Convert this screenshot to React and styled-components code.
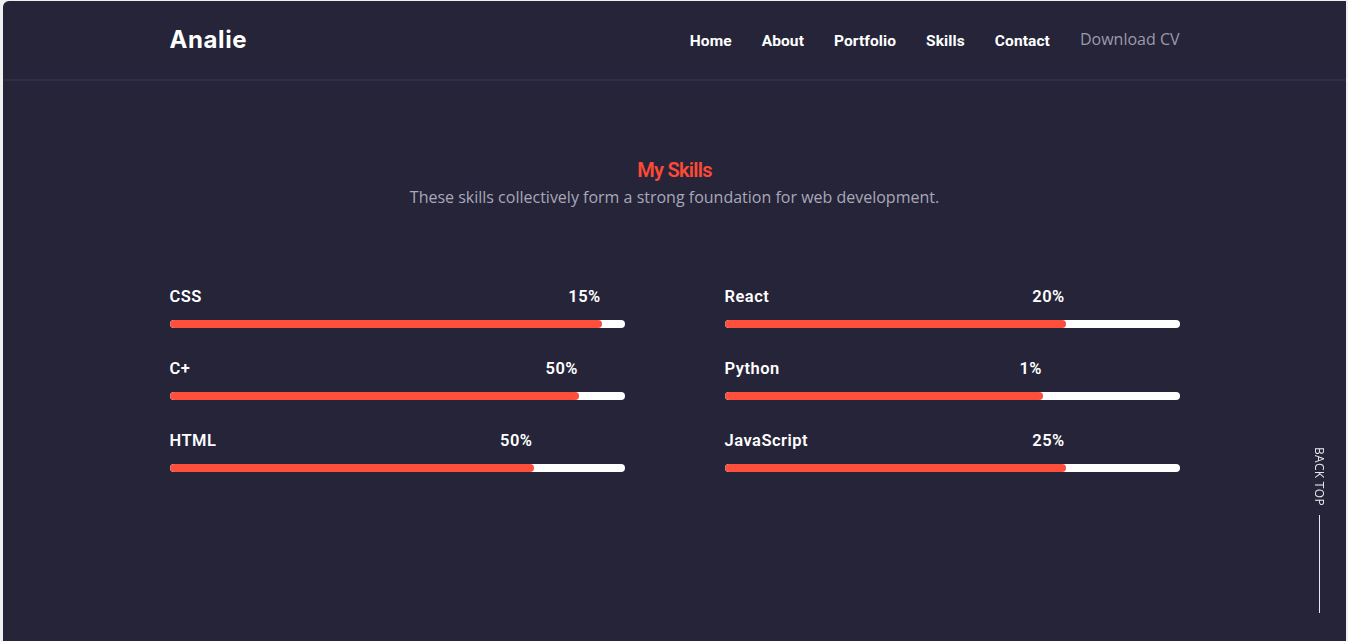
import React from 'react'
import styled, { createGlobalStyle } from 'styled-components'

const GlobalStyle = createGlobalStyle`
	* { box-sizing: border-box; }
	html, body {
		margin: 0;
		padding: 0;
		background: #f0f0f0;
		overflow: hidden;
	}
	#root {
		padding: 1px 2px 0 3px;
	}
`

const skills = [
	{ name: 'CSS', pct: '15%', fill: 95 },
	{ name: 'React', pct: '20%', fill: 75 },
	{ name: 'C+', pct: '50%', fill: 90 },
	{ name: 'Python', pct: '1%', fill: 70 },
	{ name: 'HTML', pct: '50%', fill: 80 },
	{ name: 'JavaScript', pct: '25%', fill: 75 },
]

const navLinks = ['Home', 'About', 'Portfolio', 'Skills', 'Contact']

const Page = styled.div`
	background: #252439;
	border-top-left-radius: 6px;
	min-height: 700px;
	color: #fff;
`

const Header = styled.header`
	height: 80px;
	border-bottom: 2px solid #2e2d43;
`

const Container = styled.div`
	width: 1010px;
	margin: 0 auto;
`

const HeaderInner = styled(Container)`
	height: 100%;
	display: flex;
	align-items: center;
	justify-content: space-between;
`

const Logo = styled.a`
	font-family: Inter, "Noto Sans", sans-serif;
	font-weight: 700;
	font-size: 24px;
	letter-spacing: 0.6px;
	color: #fff;
	margin-top: -2px;
`

const Nav = styled.nav`
	display: flex;
	align-items: center;
	gap: 30px;
`

const NavLink = styled.a`
	font-family: Roboto, "Liberation Sans", sans-serif;
	font-weight: 700;
	font-size: 15.5px;
	letter-spacing: 0.1px;
	color: #fff;
	margin-top: 1px;
`

const DownloadLink = styled.a`
	font-family: "Open Sans", sans-serif;
	font-size: 16px;
	color: #9c9baa;
	margin-top: -2px;
`

const Section = styled.section`
	padding-top: 77px;
`

const SectionHead = styled.div`
	text-align: center;
`

const Title = styled.h2`
	margin: 0;
	font-family: Roboto, "Liberation Sans", sans-serif;
	font-weight: 600;
	font-size: 20px;
	line-height: 24px;
	letter-spacing: -0.7px;
	color: #fd4a36;
`

const Subtitle = styled.p`
	margin: 3px 0 0;
	font-family: "Open Sans", sans-serif;
	font-size: 16px;
	line-height: 24px;
	color: #a9a8b7;
`

const Grid = styled(Container)`
	margin-top: 77px;
	display: grid;
	grid-template-columns: 455px 455px;
	column-gap: 100px;
	row-gap: 30px;
`

const Skill = styled.div`
	display: flex;
	flex-direction: column;
`

const LabelRow = styled.div`
	display: flex;
	justify-content: space-between;
	font-family: Roboto, "Liberation Sans", sans-serif;
	font-weight: 600;
	font-size: 16.5px;
	line-height: 20px;
	letter-spacing: 0.5px;
	color: #fff;
	margin-top: 1px;
	margin-bottom: 13px;
`

const Percent = styled.span`
	margin-right: 1px;
`

const Track = styled.div`
	height: 8px;
	border-radius: 4px;
	background: #fff;
	overflow: hidden;
`

const Fill = styled.div`
	height: 100%;
	border-radius: 4px;
	background: #fd4f3b;
`

const BackTop = styled.a`
	position: fixed;
	right: 20px;
	bottom: 28px;
	display: flex;
	flex-direction: column;
	align-items: center;
	gap: 9px;
	color: #e8e8ee;
`

const BackText = styled.span`
	writing-mode: vertical-rl;
	font-family: "Open Sans", sans-serif;
	font-size: 12px;
	letter-spacing: 0.3px;
`

const BackLine = styled.span`
	width: 1px;
	height: 98px;
	background: #e8e8ee;
`

export default function App() {
	return (
		<>
			<GlobalStyle />
			<Page>
				<Header>
					<HeaderInner>
						<Logo>Analie</Logo>
						<Nav>
							{navLinks.map(l => <NavLink key={l}>{l}</NavLink>)}
							<DownloadLink>Download CV</DownloadLink>
						</Nav>
					</HeaderInner>
				</Header>
				<Section>
					<SectionHead>
						<Title>My Skills</Title>
						<Subtitle>These skills collectively form a strong foundation for web development.</Subtitle>
					</SectionHead>
					<Grid>
						{skills.map(s => (
							<Skill key={s.name}>
								<LabelRow style={{ width: `${s.fill}%` }}>
									<span>{s.name}</span>
									<Percent>{s.pct}</Percent>
								</LabelRow>
								<Track>
									<Fill style={{ width: `${s.fill}%` }} />
								</Track>
							</Skill>
						))}
					</Grid>
				</Section>
				<BackTop>
					<BackText>BACK TOP</BackText>
					<BackLine />
				</BackTop>
			</Page>
		</>
	)
}
